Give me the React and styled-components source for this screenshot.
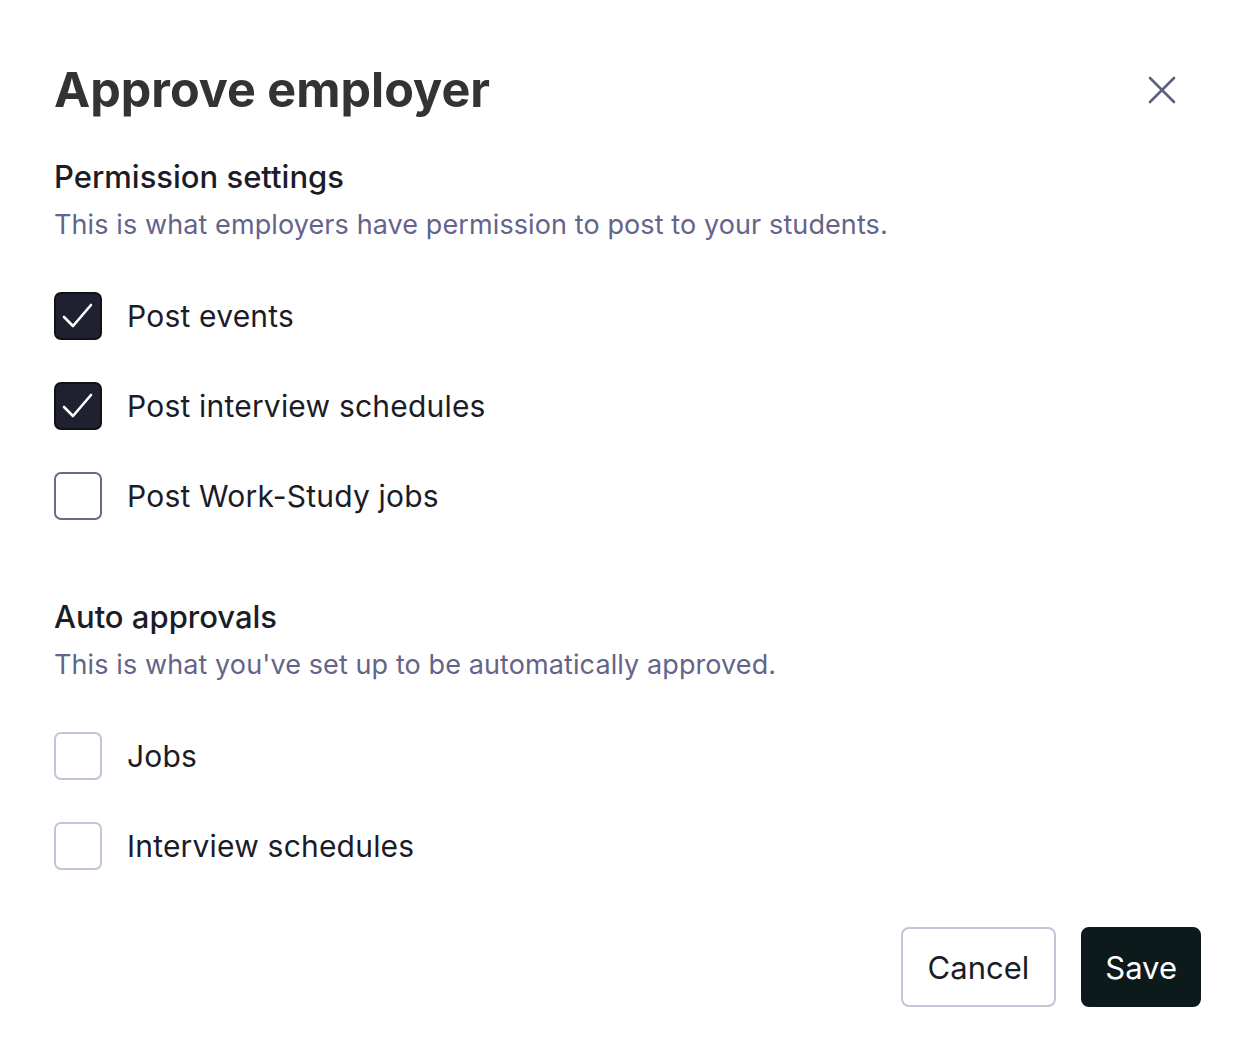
import React, { useState } from "react";
import styled, { createGlobalStyle } from "styled-components";

const GlobalStyle = createGlobalStyle`
  body {
    margin: 0;
    background: #ffffff;
    font-family: Inter, "Noto Sans", "Liberation Sans", sans-serif;
  }
`;

const Dialog = styled.div`
  width: 1256px;
  height: 1050px;
  box-sizing: border-box;
  padding: 62px 54px 0 54px;
  display: flex;
  flex-direction: column;
`;

const Header = styled.div`
  display: flex;
  align-items: center;
  justify-content: space-between;
`;

const Title = styled.h1`
  margin: 0;
  font-size: 48.5px;
  line-height: 56px;
  font-weight: 700;
  color: #333333;
`;

const CloseButton = styled.button`
  background: none;
  border: none;
  padding: 0;
  margin-right: 24px;
  width: 32px;
  height: 32px;
  display: flex;
  align-items: center;
  justify-content: center;
  cursor: pointer;
`;

const Section = styled.section`
  margin-top: ${(p) => p.$top}px;
`;

const SectionTitle = styled.h2`
  margin: 0;
  font-size: 31px;
  line-height: 40px;
  font-weight: 500;
  color: #1c1c28;
`;

const SectionText = styled.p`
  margin: 10px 0 0 0;
  font-size: 27px;
  line-height: 36px;
  letter-spacing: 0.1px;
  color: #64648a;
`;

const List = styled.div`
  margin-top: 49px;
  display: flex;
  flex-direction: column;
  gap: 42px;
`;

const Row = styled.label`
  display: flex;
  align-items: center;
  gap: 25px;
  cursor: pointer;
`;

const Box = styled.span`
  width: 48px;
  height: 48px;
  box-sizing: border-box;
  border-radius: 7px;
  border: 2px solid ${(p) => (p.$checked ? "#111118" : p.$light ? "#c4c4d6" : "#6a6a88")};
  background: ${(p) => (p.$checked ? "#1f2030" : "#ffffff")};
  display: flex;
  align-items: center;
  justify-content: center;
  flex-shrink: 0;
`;

const Label = styled.span`
  font-size: 30px;
  line-height: 40px;
  letter-spacing: 0.2px;
  color: #1c1c28;
`;

const Footer = styled.div`
  margin-top: 57px;
  display: flex;
  justify-content: flex-end;
  gap: 25px;
  margin-right: 1px;
`;

const Button = styled.button`
  height: 80px;
  box-sizing: border-box;
  padding: 0 ${(p) => (p.$primary ? 22 : 25)}px;
  border-radius: 8px;
  font-family: inherit;
  font-size: 31px;
  cursor: pointer;
  border: 2px solid ${(p) => (p.$primary ? "#0d1a1c" : "#c4c4d6")};
  background: ${(p) => (p.$primary ? "#0d1a1c" : "#ffffff")};
  color: ${(p) => (p.$primary ? "#ffffff" : "#1c1c28")};
`;

const Check = () => (
  <svg width="36" height="36" viewBox="0 0 36 36" fill="none">
    <path d="M4 19 L13 28 L31 7" stroke="#ffffff" strokeWidth="2.6" strokeLinecap="round" strokeLinejoin="round" />
  </svg>
);

const CheckRow = ({ label, checked, light, onToggle }) => (
  <Row onClick={onToggle}>
    <Box $checked={checked} $light={light}>{checked && <Check />}</Box>
    <Label>{label}</Label>
  </Row>
);

const App = () => {
  const [perms, setPerms] = useState({ events: true, interviews: true, workStudy: false });
  const [auto, setAuto] = useState({ jobs: false, schedules: false });

  return (
    <>
      <GlobalStyle />
      <Dialog>
        <Header>
          <Title>Approve employer</Title>
          <CloseButton aria-label="Close">
            <svg width="30" height="30" viewBox="0 0 30 30" fill="none">
              <path d="M3 3 L27 27 M27 3 L3 27" stroke="#5c5f80" strokeWidth="2.6" strokeLinecap="round" />
            </svg>
          </CloseButton>
        </Header>

        <Section $top={39}>
          <SectionTitle>Permission settings</SectionTitle>
          <SectionText>This is what employers have permission to post to your students.</SectionText>
          <List>
            <CheckRow label="Post events" checked={perms.events} onToggle={() => setPerms({ ...perms, events: !perms.events })} />
            <CheckRow label="Post interview schedules" checked={perms.interviews} onToggle={() => setPerms({ ...perms, interviews: !perms.interviews })} />
            <CheckRow label="Post Work-Study jobs" checked={perms.workStudy} onToggle={() => setPerms({ ...perms, workStudy: !perms.workStudy })} />
          </List>
        </Section>

        <Section $top={77}>
          <SectionTitle>Auto approvals</SectionTitle>
          <SectionText>This is what you've set up to be automatically approved.</SectionText>
          <List>
            <CheckRow light label="Jobs" checked={auto.jobs} onToggle={() => setAuto({ ...auto, jobs: !auto.jobs })} />
            <CheckRow light label="Interview schedules" checked={auto.schedules} onToggle={() => setAuto({ ...auto, schedules: !auto.schedules })} />
          </List>
        </Section>

        <Footer>
          <Button>Cancel</Button>
          <Button $primary>Save</Button>
        </Footer>
      </Dialog>
    </>
  );
};

export default App;
